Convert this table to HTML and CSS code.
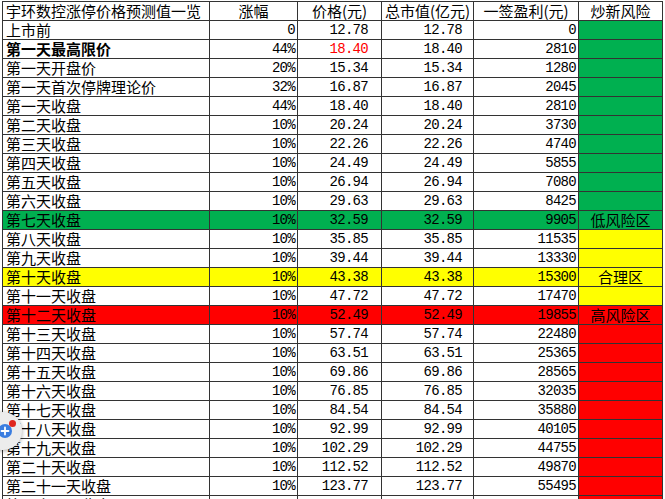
FILE: index.html
```html
<!DOCTYPE html>
<html lang="zh-CN">
<head>
<meta charset="utf-8">
<title>宇环数控涨停价格预测值一览</title>
<link rel="stylesheet" href="styles.css">
</head>
<body>
<div class="sheet">
<table class="grid">
<colgroup>
<col class="c-name"><col class="c-pct"><col class="c-price"><col class="c-cap"><col class="c-profit"><col class="c-risk">
</colgroup>
<thead>
<tr><th class="title">宇环数控涨停价格预测值一览</th><th>涨幅</th><th>价格(元)</th><th>总市值(亿元)</th><th>一签盈利(元)</th><th>炒新风险</th></tr>
</thead>
<tbody>
<tr><td class="name">上市前</td><td class="num pct">0</td><td class="num price">12.78</td><td class="num cap">12.78</td><td class="num profit">0</td><td class="risk g"></td></tr>
<tr><td class="name bold">第一天最高限价</td><td class="num pct">44%</td><td class="num price red-text">18.40</td><td class="num cap">18.40</td><td class="num profit">2810</td><td class="risk g"></td></tr>
<tr><td class="name">第一天开盘价</td><td class="num pct">20%</td><td class="num price">15.34</td><td class="num cap">15.34</td><td class="num profit">1280</td><td class="risk g"></td></tr>
<tr><td class="name">第一天首次停牌理论价</td><td class="num pct">32%</td><td class="num price">16.87</td><td class="num cap">16.87</td><td class="num profit">2045</td><td class="risk g"></td></tr>
<tr><td class="name">第一天收盘</td><td class="num pct">44%</td><td class="num price">18.40</td><td class="num cap">18.40</td><td class="num profit">2810</td><td class="risk g"></td></tr>
<tr><td class="name">第二天收盘</td><td class="num pct">10%</td><td class="num price">20.24</td><td class="num cap">20.24</td><td class="num profit">3730</td><td class="risk g"></td></tr>
<tr><td class="name">第三天收盘</td><td class="num pct">10%</td><td class="num price">22.26</td><td class="num cap">22.26</td><td class="num profit">4740</td><td class="risk g"></td></tr>
<tr><td class="name">第四天收盘</td><td class="num pct">10%</td><td class="num price">24.49</td><td class="num cap">24.49</td><td class="num profit">5855</td><td class="risk g"></td></tr>
<tr><td class="name">第五天收盘</td><td class="num pct">10%</td><td class="num price">26.94</td><td class="num cap">26.94</td><td class="num profit">7080</td><td class="risk g"></td></tr>
<tr><td class="name">第六天收盘</td><td class="num pct">10%</td><td class="num price">29.63</td><td class="num cap">29.63</td><td class="num profit">8425</td><td class="risk g"></td></tr>
<tr class="row-g"><td class="name">第七天收盘</td><td class="num pct">10%</td><td class="num price">32.59</td><td class="num cap">32.59</td><td class="num profit">9905</td><td class="risk g">低风险区</td></tr>
<tr><td class="name">第八天收盘</td><td class="num pct">10%</td><td class="num price">35.85</td><td class="num cap">35.85</td><td class="num profit">11535</td><td class="risk y"></td></tr>
<tr><td class="name">第九天收盘</td><td class="num pct">10%</td><td class="num price">39.44</td><td class="num cap">39.44</td><td class="num profit">13330</td><td class="risk y"></td></tr>
<tr class="row-y"><td class="name">第十天收盘</td><td class="num pct">10%</td><td class="num price">43.38</td><td class="num cap">43.38</td><td class="num profit">15300</td><td class="risk y">合理区</td></tr>
<tr><td class="name">第十一天收盘</td><td class="num pct">10%</td><td class="num price">47.72</td><td class="num cap">47.72</td><td class="num profit">17470</td><td class="risk y"></td></tr>
<tr class="row-r"><td class="name">第十二天收盘</td><td class="num pct">10%</td><td class="num price">52.49</td><td class="num cap">52.49</td><td class="num profit">19855</td><td class="risk r">高风险区</td></tr>
<tr><td class="name">第十三天收盘</td><td class="num pct">10%</td><td class="num price">57.74</td><td class="num cap">57.74</td><td class="num profit">22480</td><td class="risk r"></td></tr>
<tr><td class="name">第十四天收盘</td><td class="num pct">10%</td><td class="num price">63.51</td><td class="num cap">63.51</td><td class="num profit">25365</td><td class="risk r"></td></tr>
<tr><td class="name">第十五天收盘</td><td class="num pct">10%</td><td class="num price">69.86</td><td class="num cap">69.86</td><td class="num profit">28565</td><td class="risk r"></td></tr>
<tr><td class="name">第十六天收盘</td><td class="num pct">10%</td><td class="num price">76.85</td><td class="num cap">76.85</td><td class="num profit">32035</td><td class="risk r"></td></tr>
<tr><td class="name">第十七天收盘</td><td class="num pct">10%</td><td class="num price">84.54</td><td class="num cap">84.54</td><td class="num profit">35880</td><td class="risk r"></td></tr>
<tr><td class="name">第十八天收盘</td><td class="num pct">10%</td><td class="num price">92.99</td><td class="num cap">92.99</td><td class="num profit">40105</td><td class="risk r"></td></tr>
<tr><td class="name">第十九天收盘</td><td class="num pct">10%</td><td class="num price">102.29</td><td class="num cap">102.29</td><td class="num profit">44755</td><td class="risk r"></td></tr>
<tr><td class="name">第二十天收盘</td><td class="num pct">10%</td><td class="num price">112.52</td><td class="num cap">112.52</td><td class="num profit">49870</td><td class="risk r"></td></tr>
<tr><td class="name">第二十一天收盘</td><td class="num pct">10%</td><td class="num price">123.77</td><td class="num cap">123.77</td><td class="num profit">55495</td><td class="risk r"></td></tr>
<tr><td class="name">第二十二天收盘</td><td class="num pct">10%</td><td class="num price">136.15</td><td class="num cap">136.15</td><td class="num profit">61685</td><td class="risk r"></td></tr>
</tbody>
</table>
<div class="fab">
  <span class="fab-btn">
    <svg viewBox="0 0 14 14" width="14" height="14"><circle cx="7" cy="7" r="7" fill="#3a7de0"/><path d="M7 3.5v7M3.5 7h7" stroke="#fff" stroke-width="1.8" stroke-linecap="round"/></svg>
  </span>
  <span class="fab-dot"></span>
</div>
</div>
</body>
</html>
```
FILE: styles.css
```css
html, body {
  margin: 0;
  padding: 0;
  background: #ffffff;
}
body {
  width: 665px;
  height: 499px;
  overflow: hidden;
  font-family: "Noto Sans CJK SC", "Noto Sans", sans-serif;
  color: #000;
}
.sheet {
  position: relative;
  width: 665px;
  height: 499px;
  overflow: hidden;
  padding: 1px 0 0 2px;
  box-sizing: border-box;
}
.grid {
  border-collapse: collapse;
  table-layout: fixed;
  width: 661px;
}
.c-name { width: 207px; }
.c-pct { width: 88px; }
.c-price { width: 84px; }
.c-cap { width: 92px; }
.c-profit { width: 105px; }
.c-risk { width: 84px; }

.grid th, .grid td {
  border: 1px solid #333;
  height: 18px;
  padding: 0;
  font-size: 15px;
  line-height: 18px;
  font-weight: normal;
  white-space: nowrap;
  overflow: visible;
  vertical-align: middle;
}
.grid th {
  text-align: center;
}
.grid th.title {
  text-align: left;
  padding-left: 3px;
  overflow: hidden;
}
.name {
  text-align: left;
  padding-left: 3px !important;
}
.bold {
  font-weight: bold !important;
}
.num {
  font-family: "Liberation Mono", "DejaVu Sans Mono", monospace;
  font-size: 14px !important;
  letter-spacing: -0.7px;
  text-align: right;
}
.pct { padding-right: 2px !important; }
.price { padding-right: 13px !important; }
.cap { padding-right: 11px !important; }
.profit { padding-right: 2px !important; }
.risk { text-align: center; }
.red-text { color: #ff0000; }

.g { background: #00b050; }
.y { background: #ffff00; }
.r { background: #ff0000; }
.row-g td { background: #00b050; }
.row-y td { background: #ffff00; }
.row-r td { background: #ff0000; }

.fab {
  position: absolute;
  left: -16px;
  top: 412px;
  width: 38px;
  height: 38px;
  border-radius: 50%;
  background: #ececec;
  box-shadow: 0 1px 4px rgba(0,0,0,0.35);
}
.fab-btn {
  position: absolute;
  left: 14px;
  top: 12px;
  width: 14px;
  height: 14px;
  display: block;
}
.fab-btn svg { display: block; }
.fab-dot {
  position: absolute;
  left: 25px;
  top: 8px;
  width: 7px;
  height: 7px;
  border-radius: 50%;
  background: #e0261c;
}
```
